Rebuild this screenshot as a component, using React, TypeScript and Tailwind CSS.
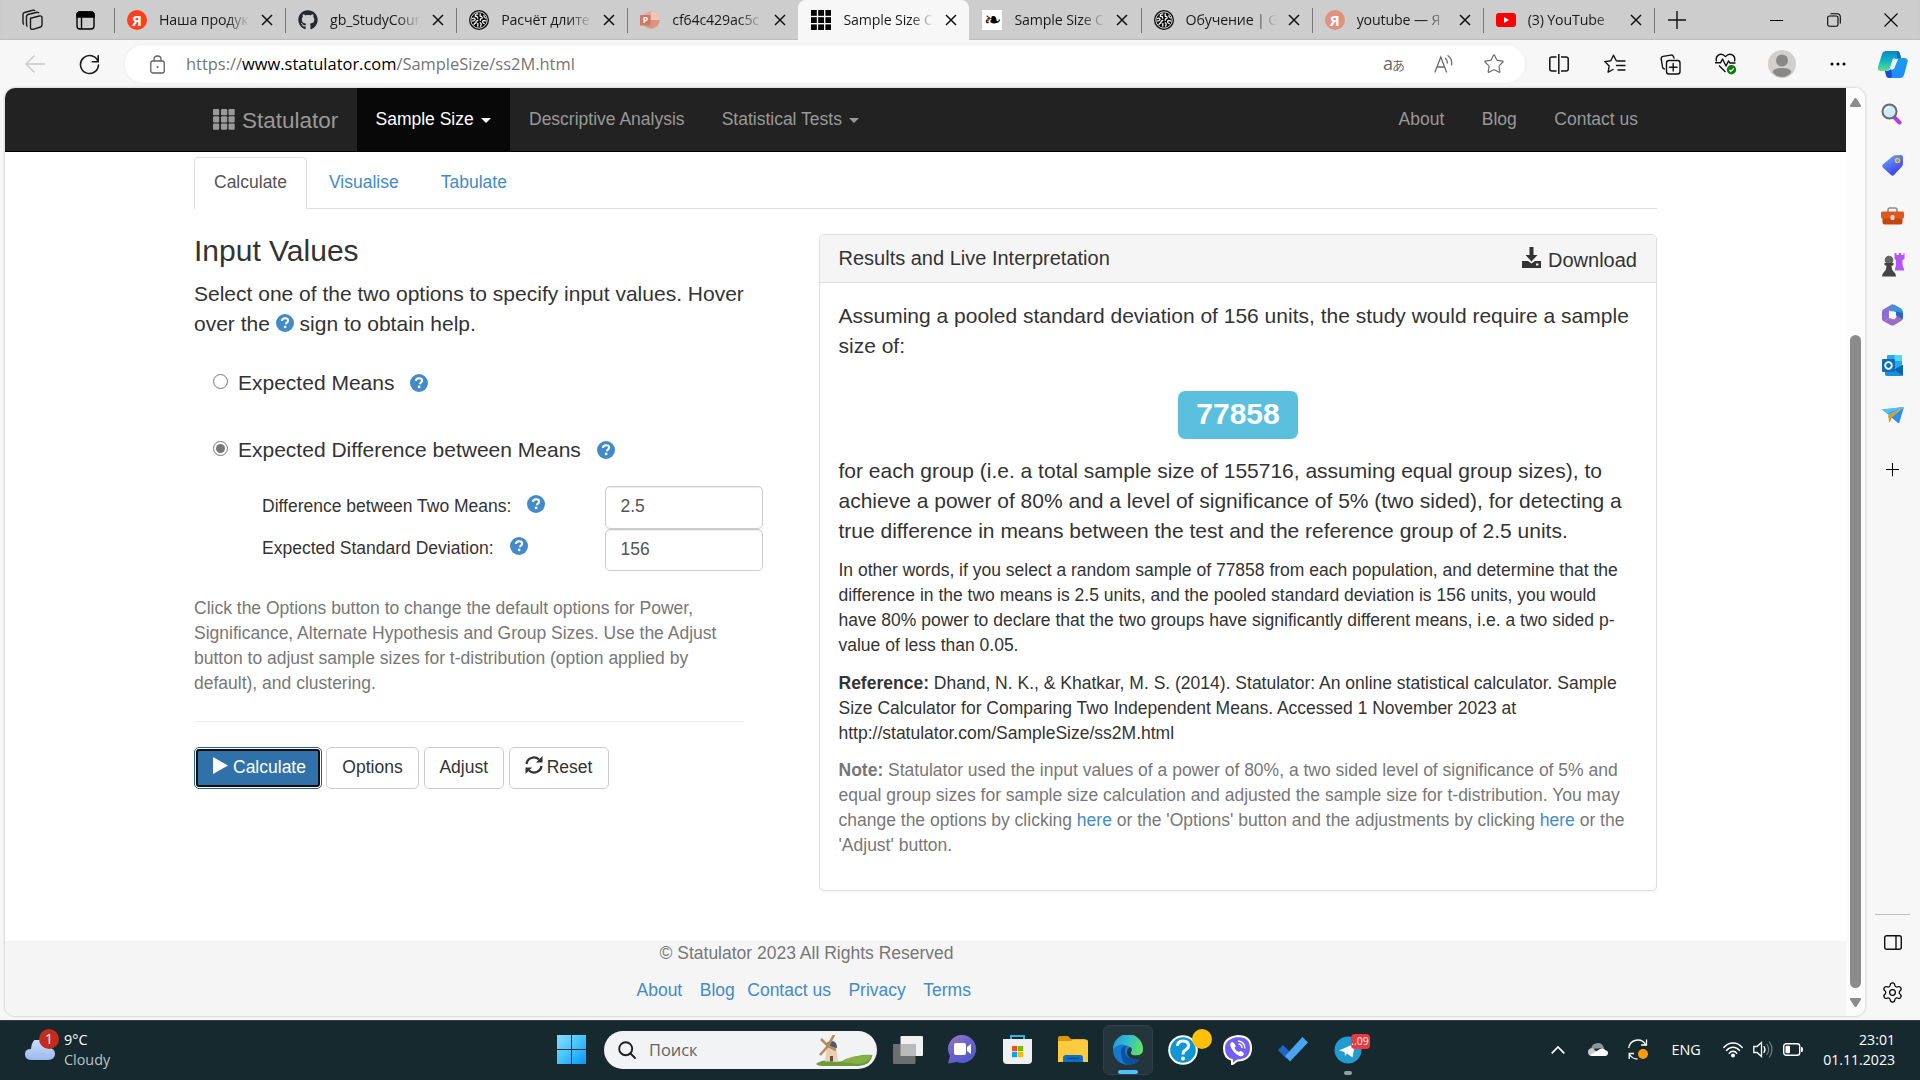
import React from 'react';
import { Star, Plus, Settings } from 'lucide-react';
import { FaGithub } from 'react-icons/fa';

const fade = '[mask-image:linear-gradient(to_right,black_74%,transparent_100%)]';

function Close() {
  return (
    <svg width="12" height="12" viewBox="0 0 12 12" stroke="#111" strokeWidth="1.5" fill="none">
      <path d="M1 1l10 10M11 1L1 11" />
    </svg>
  );
}

function Yandex({ dim }: { dim?: boolean }) {
  return (
    <span className={`flex h-5 w-5 items-center justify-center rounded-full text-[15px] leading-none font-bold text-white ${dim ? 'bg-[#e0917f]' : 'bg-[#fc3f1d]'}`}>
      Я
    </span>
  );
}

function Brain() {
  return (
    <svg width="20" height="20" viewBox="0 0 20 20" fill="none">
      <circle cx="10" cy="10" r="10" fill="#0a0a0a" />
      <circle cx="10" cy="10" r="8.200" stroke="#e6e6e6" strokeWidth="1" />
      <g stroke="#f2f2f2" strokeWidth="1.300" strokeLinecap="round" strokeLinejoin="round">
        <path d="M8.800 3.800Q6 4 6.300 6.300 8.500 6 8.700 8.200M3.500 8.500Q5 7.500 6.200 9.300 5 11.500 3.300 11M8.700 10.500Q6.500 11 7 13 5.500 13 5 14.500M8.800 13.500v2.700" />
        <path d="M11.200 3.800v2.500Q13.500 6 13 8.300 11 8.500 11.300 10.300M15 5.500Q14.500 7 16.500 8M16.700 11Q14.500 9.800 13.500 11.500 13.800 13.500 15.300 13.700M11.200 12.800Q13 14 11.500 16.200" />
      </g>
    </svg>
  );
}

function GridMark() {
  return (
    <svg width="20" height="20" viewBox="0 0 20 20">
      {[0, 7.2, 14.4].map((y) =>
        [0, 7.2, 14.4].map((x) => <rect key={`${x}-${y}`} x={x} y={y} width="5.800" height="5.800" fill="#000" />),
      )}
    </svg>
  );
}

function PowerPoint() {
  return (
    <svg width="20" height="20" viewBox="0 0 20 20">
      <circle cx="11" cy="10" r="8.800" fill="#e5a999" />
      <path d="M11 1.200a8.800 8.800 0 0 1 8.800 8.800H11z" fill="#f0c4b6" />
      <path d="M2.500 12a8.800 8.800 0 0 0 17.200-2H11z" fill="#db9482" />
      <rect x="0" y="5" width="10.500" height="10.500" rx="1" fill="#cf7765" />
      <text x="2.800" y="13.300" fontSize="8.500" fontWeight="700" fill="#fff" fontFamily="Open Sans, sans-serif">P</text>
    </svg>
  );
}

function Leaf() {
  return (
    <span className="flex h-5 w-5 items-center justify-center bg-white font-['DejaVu_Sans',sans-serif] text-[21px] leading-5 text-black">❧</span>
  );
}

function YouTube() {
  return (
    <svg width="20" height="20" viewBox="0 0 20 20">
      <rect x="0" y="3" width="20" height="14" rx="3" fill="#f00" />
      <path d="M8 7v6l5-3z" fill="#fff" />
    </svg>
  );
}

type TabProps = { icon: React.ReactNode; title: string; active?: boolean; line?: boolean };

function Tab({ icon, title, active, line }: TabProps) {
  return (
    <div className={`relative flex h-10 w-[171.100px] shrink-0 items-center pl-[13px] ${active ? 'rounded-t-lg bg-[#f7f7f7]' : ''}`}>
      {line && <span className="absolute top-2 left-0 h-[25px] w-px bg-[#767676]" />}
      <span className="flex h-5 w-5 shrink-0">{icon}</span>
      <span className={`ml-3 w-[91px] text-[14.200px] leading-5 tracking-[-0.15px] whitespace-nowrap text-[#1b1b1b] ${fade}`}>{title}</span>
      <span className="ml-[11px]">
        <Close />
      </span>
    </div>
  );
}

function TabStrip() {
  return (
    <div className="flex h-10 shrink-0 bg-[#cdcdcd] shadow-[inset_0_-1px_1px_#bdbdbd]">
      <div className="flex w-[114px] items-center gap-[32px] pl-[22px]">
        <svg width="22" height="22" viewBox="0 0 22 22" fill="none" stroke="#1b1b1b" strokeWidth="1.400" strokeLinejoin="round">
          <path d="M8.500 9.300l9-2.300q2-.4 2.500 1v8q0 1.500-1.500 2l-7.500 2.300q-2.500.5-2.500-1.800z" />
          <path d="M5.500 17.500q-1-.5-1-2V7.500q0-1.500 1.500-2L15 3.300q1.500-.3 2 1" />
          <path d="M2 15.500q-1-.5-1-2V5.500q0-1.500 1.500-2L11 1.200q1.500-.3 2 .8" />
        </svg>
        <svg width="19" height="19" viewBox="0 0 19 19" fill="none" stroke="#000" strokeWidth="1.400">
          <rect x="1" y="1" width="17" height="17" rx="3" />
          <path d="M1 6V4q0-3 3-3h11q3 0 3 3v2z" fill="#000" />
          <path d="M5.500 6v12" />
        </svg>
      </div>
      <Tab line icon={<Yandex />} title="Наша продук" />
      <Tab line icon={<FaGithub size={20} color="#24292f" />} title="gb_StudyCour" />
      <Tab line icon={<Brain />} title="Расчёт длите." />
      <Tab line icon={<PowerPoint />} title="cf64c429ac5c" />
      <Tab active icon={<GridMark />} title="Sample Size C" />
      <Tab icon={<Leaf />} title="Sample Size C" />
      <Tab line icon={<Brain />} title="Обучение | G" />
      <Tab line icon={<Yandex dim />} title="youtube — Я" />
      <Tab line icon={<YouTube />} title="(3) YouTube" />
      <div className="relative flex w-[71px] items-center pl-[14px]">
        <span className="absolute top-2 left-0 h-[25px] w-px bg-[#767676]" />
        <svg width="18" height="18" viewBox="0 0 18 18" stroke="#111" strokeWidth="1.400">
          <path d="M9 0v18M0 9h18" />
        </svg>
      </div>
      <div className="ml-auto flex w-[172px]">
        <div className="flex w-[57px] items-center justify-center">
          <span className="h-px w-[13px] bg-black" />
        </div>
        <div className="flex w-[57px] items-center justify-center">
          <svg width="14" height="14" viewBox="0 0 14 14" fill="none" stroke="#000" strokeWidth="1.100">
            <rect x="0.700" y="3" width="10.300" height="10.300" rx="1.800" />
            <path d="M3.500.8h6.500q3.300 0 3.300 3.300v6.500" />
          </svg>
        </div>
        <div className="flex w-[57px] items-center justify-center">
          <svg width="14" height="14" viewBox="0 0 14 14" stroke="#000" strokeWidth="1.100">
            <path d="M.5.5l13 13M13.500.5l-13 13" />
          </svg>
        </div>
      </div>
    </div>
  );
}

function Cell({ children, w = 'w-[55.700px]' }: { children: React.ReactNode; w?: string }) {
  return <span className={`flex shrink-0 items-center justify-center ${w}`}>{children}</span>;
}

function Toolbar() {
  return (
    <div className="flex h-12 shrink-0 items-start bg-[#f7f7f7] pt-[5px]">
      <div className="flex h-[38px] w-[125px] items-center pl-[25px]">
        <svg width="20" height="18" viewBox="0 0 20 18" fill="none" stroke="#c9c9c9" strokeWidth="1.400" strokeLinecap="round">
          <path d="M19.500 9H1M9 1L1 9l8 8" />
        </svg>
        <svg className="ml-[34px]" width="21" height="21" viewBox="0 0 21 21" fill="none" stroke="#1b1b1b" strokeWidth="1.600" strokeLinecap="round">
          <path d="M19 7.500A9 9 0 1 0 19.500 11M19.200 1.800v6h-6" />
        </svg>
      </div>
      <div className="flex h-[38px] w-[1400px] items-center rounded-full bg-white shadow-[0_0_4px_#0000000f]">
        <svg className="ml-[25px]" width="15" height="19" viewBox="0 0 15 19" fill="none" stroke="#5f5f5f" strokeWidth="1.300">
          <rect x="0.800" y="6" width="13.400" height="12" rx="2" />
          <path d="M4 6V4q0-3 3.500-3T11 4v2" />
          <circle cx="7.500" cy="12" r="1" fill="#5f5f5f" stroke="none" />
        </svg>
        <span className="ml-[21px] text-[16.450px] leading-6 text-[#757575]">
          https://<span className="text-black">www.statulator.com</span>/SampleSize/ss2M.html
        </span>
        <div className="mr-1.5 ml-auto flex text-[#6b6b6b]">
          <Cell w="w-[50px]">
            <span className="flex items-baseline text-[18px] leading-5">
              a<span className="-ml-px font-['Noto_Sans_CJK_JP'] text-[13px]">あ</span>
            </span>
          </Cell>
          <Cell w="w-[50px]">
            <svg width="20" height="18" viewBox="0 0 20 18" fill="none" stroke="#6b6b6b" strokeWidth="1.300" strokeLinecap="round">
              <path d="M1 17L6.800 2l5.700 15M3 12h7.500M11.500 3.500q2 1.500 1.800 4.500M14 .8q4.500 3 3.500 9" />
            </svg>
          </Cell>
          <Cell w="w-[50px]">
            <Star size={22} strokeWidth={1.3} />
          </Cell>
        </div>
      </div>
      <div className="ml-1.5 flex h-[38px] items-center">
        <Cell>
          <svg width="20" height="20" viewBox="0 0 20 20" fill="none" stroke="#111" strokeWidth="1.500">
            <path d="M7.500 3H3Q.8 3 .8 5v10q0 2 2.200 2h4.500M12 3h5q2.200 0 2.200 2v10q0 2-2.200 2h-5M9.800 0v20" />
          </svg>
        </Cell>
        <Cell>
          <svg width="22" height="21" viewBox="0 0 22 21" fill="none" stroke="#111" strokeWidth="1.400" strokeLinecap="round" strokeLinejoin="round">
            <path d="M14 7L12.300 6.700 9.500 1.200 6.800 6.700l-6 .9L5.200 12l-1.100 6.200 5-2.700M14.500 7H21M12.500 11.500H21M14 16h7" />
          </svg>
        </Cell>
        <Cell>
          <svg width="21" height="21" viewBox="0 0 21 21" fill="none" stroke="#111" strokeWidth="1.400" strokeLinecap="round">
            <rect x="6.500" y="6.500" width="13.500" height="13.500" rx="2.500" />
            <path d="M13.200 9.500v7.500M9.500 13.200H17M14 4l-.5-1.300Q12.800.8 11 1.100L3 2.400Q1 2.800 1.200 4.800L2.500 13q.3 1.500 1.800 2" />
          </svg>
        </Cell>
        <Cell>
          <svg width="22" height="22" viewBox="0 0 22 22" fill="none">
            <g stroke="#111" strokeWidth="1.400" strokeLinejoin="round">
              <path d="M1.600 8.500Q.3 4.500 3 2.400q4-2.600 7.500 1.200Q14-.2 18 2.400q2.700 2.100 1.400 6.100" />
              <path d="M0 9.800h5.500l2-3.800 3.500 7 2.500-5 1.500 2h5.500M4 12.500l6.500 6.500" />
            </g>
            <circle cx="16.500" cy="16.800" r="4.700" fill="#107c10" />
            <path d="M14.300 16.900l1.600 1.600 2.800-3" stroke="#fff" strokeWidth="1.200" />
          </svg>
        </Cell>
        <Cell>
          <svg width="28" height="28" viewBox="0 0 28 28">
            <circle cx="14" cy="14" r="14" fill="#d2d0ce" />
            <circle cx="14" cy="10.500" r="6" fill="#8a8886" />
            <path d="M4.500 22q1-4 9.500-4t9.500 4q-3.500 5-9.500 5t-9.500-5z" fill="#8a8886" />
          </svg>
        </Cell>
        <Cell>
          <svg className="ml-0.5" width="16" height="4" viewBox="0 0 16 4">
            <circle cx="2" cy="2" r="1.500" />
            <circle cx="8" cy="2" r="1.500" />
            <circle cx="14" cy="2" r="1.500" />
          </svg>
        </Cell>
        <span className="ml-[13px]">
          <svg width="30" height="27" viewBox="0 0 30 27">
            <defs>
              <linearGradient id="cpA" x1="0" y1="0" x2="0" y2="1">
                <stop offset="0" stopColor="#0a86c9" />
                <stop offset="0.500" stopColor="#12b5c0" />
                <stop offset="1" stopColor="#5fe08a" />
              </linearGradient>
              <linearGradient id="cpB" x1="0" y1="0" x2="0" y2="1">
                <stop offset="0" stopColor="#1a9be6" />
                <stop offset="1" stopColor="#1f8cff" />
              </linearGradient>
            </defs>
            <path d="M8 0h11q2 0 2.700 2l1.300 5h-6q-2 0-2.600 2l-2.600 8.500Q11 20 8 20H3q-4 0-3-4L4 3q1-3 4-3z" fill="url(#cpA)" />
            <path d="M22 27H11q-2 0-2.700-2L7 20h3q2 0 3-3l3-8.500Q17 6 20 7h6q4.500 0 3.500 4L26 24q-1 3-4 3z" fill="url(#cpB)" />
            <path d="M7 20h3q2 0 3-3l1 8q-.5 2-2 2-3 0-3.700-2z" fill="#1b4ad6" />
            <path d="M19 0q2 0 2.700 2L23 7h-4z" fill="#1567c8" />
            <path d="M15.500 9.500q.6-1.500 2-1.500h2.500L16.500 17q-.6 1.500-2 1.500H12z" fill="#f7f7f7" />
          </svg>
        </span>
      </div>
    </div>
  );
}

function Caret() {
  return <span className="ml-[7px] inline-block border-x-5 border-t-5 border-x-transparent border-t-current align-middle" />;
}

function Navbar() {
  return (
    <nav className="flex h-16 shrink-0 border-b border-black bg-[#222] pl-[208px] text-[#999]">
      <div className="flex w-[144px] items-start pt-[20px]">
        <svg className="mt-px" width="22" height="21" viewBox="0 0 22 21" fill="#999">
          {[0, 7.3, 14.6].map((y) =>
            [0, 8, 15.5].map((x) => <rect key={`${x}-${y}`} x={x} y={y} width="6.200" height="6.200" rx="1" />),
          )}
        </svg>
        <span className="ml-[7px] text-[22.500px] leading-[25px]">Statulator</span>
      </div>
      <div className="h-[63px] w-[153px] bg-[#080808] pt-[19px] pl-[18.500px] whitespace-nowrap text-white">
        Sample Size
        <Caret />
      </div>
      <div className="ml-[19px] pt-[19px]">Descriptive Analysis</div>
      <div className="ml-[37px] pt-[19px] whitespace-nowrap">
        Statistical Tests
        <Caret />
      </div>
      <div className="mr-[208px] ml-auto flex gap-[37.500px] pt-[19px]">
        <span>About</span>
        <span>Blog</span>
        <span>Contact us</span>
      </div>
    </nav>
  );
}

function Help({ className = '' }: { className?: string }) {
  return (
    <svg className={`inline-block shrink-0 ${className}`} width="18" height="18" viewBox="0 0 18 18">
      <circle cx="9" cy="9" r="9" fill="#428bca" />
      <path d="M5.900 6.900q.2-2.700 3.200-2.700 3 0 3 2.400 0 1.300-1.300 2.100-.7.500-.7 1.600" fill="none" stroke="#fff" strokeWidth="2.100" />
      <rect x="7.900" y="11.700" width="2.400" height="2.400" fill="#fff" />
    </svg>
  );
}

function Radio({ on }: { on?: boolean }) {
  return (
    <span className="mt-[5.500px] flex h-[15px] w-[15px] items-center justify-center self-start rounded-full border border-[#767676] bg-white">
      {on && <span className="h-[9px] w-[9px] rounded-full bg-[#767676]" />}
    </span>
  );
}

function FieldRow({ label, value }: { label: string; value: string }) {
  return (
    <div className="flex h-[42.500px] items-start pl-[68px]">
      <span className="flex w-[342.500px] pt-[7.500px]">
        {label}
        <Help className="mt-[1px] ml-[16px]" />
      </span>
      <div className="h-[42.500px] w-[158.500px] rounded-[5px] border border-[#ccc] bg-white pt-[7px] pl-[15px] text-[#555] shadow-[inset_0_1px_1px_#00000013]">
        {value}
      </div>
    </div>
  );
}

function Button({ children, className = '' }: { children: React.ReactNode; className?: string }) {
  return (
    <button className={`flex h-[42.500px] items-start justify-center rounded-[5px] border border-[#ccc] bg-white pt-[7px] text-[#333] ${className}`}>
      {children}
    </button>
  );
}

function InputColumn() {
  return (
    <section className="w-[625px] pt-[25px] whitespace-nowrap">
      <h3 className="text-[30px] leading-[33px]">Input Values</h3>
      <p className="mt-3 text-[21px] leading-[30px]">
        Select one of the two options to specify input values. Hover
        <br />
        over the <Help className="-mt-[5px]" /> sign to obtain help.
      </p>
      <div className="mt-[29px] flex h-[30px] items-center pl-[19px] text-[21px] leading-[30px]">
        <Radio />
        <span className="ml-[10px]">Expected Means</span>
        <Help className="ml-[16px]" />
      </div>
      <div className="mt-[37px] flex h-[30px] items-center pl-[19px] text-[21px] leading-[30px]">
        <Radio on />
        <span className="ml-[10px]">Expected Difference between Means</span>
        <Help className="ml-[16px]" />
      </div>
      <div className="mt-[21px]">
        <FieldRow label="Difference between Two Means:" value="2.5" />
        <FieldRow label="Expected Standard Deviation:" value="156" />
      </div>
      <p className="mt-[24.500px] text-[#777]">
        Click the Options button to change the default options for Power,
        <br />
        Significance, Alternate Hypothesis and Group Sizes. Use the Adjust
        <br />
        button to adjust sample sizes for t-distribution (option applied by
        <br />
        default), and clustering.
      </p>
      <hr className="mt-[25px] w-[550px] border-[#eee]" />
      <div className="mt-[25px] flex">
        <div className="rounded-[5px] border border-[#285e8e] bg-white p-px">
          <button className="flex h-[38.500px] w-[124px] items-start rounded-[3px] border-2 border-[#101010] bg-[#3071a9] pt-[4px] pl-[15px] text-white">
            <svg className="mt-[2px] mr-[5px]" width="15" height="17" viewBox="0 0 15 17" fill="#fff">
              <path d="M0 0l15 8.500L0 17z" />
            </svg>
            Calculate
          </button>
        </div>
        <Button className="ml-1 w-[93px]">Options</Button>
        <Button className="ml-[4.500px] w-[80.500px]">Adjust</Button>
        <Button className="ml-[4.500px] w-[100px]">
          <svg className="mt-[1.500px] mr-1" width="18" height="18" viewBox="0 0 18 18" fill="none" stroke="#333" strokeWidth="2.300">
            <path d="M1.500 8A7.500 7.500 0 0 1 14 3.500M16.500 10A7.500 7.500 0 0 1 4 14.500" />
            <path d="M17.500 0v6.500H11zM.5 18v-6.500H7z" fill="#333" stroke="none" />
          </svg>
          Reset
        </Button>
      </div>
    </section>
  );
}

function ResultsPanel() {
  return (
    <section className="mt-[25px] h-[657px] w-[838px] rounded-[5px] border border-[#ddd] bg-white whitespace-nowrap shadow-[0_1px_1px_#0000000d]">
      <header className="flex h-12 items-start rounded-t border-b border-[#ddd] bg-[#f5f5f5] pt-3 pr-[19px] pl-[18.500px] text-[20px] leading-[22px]">
        <span>Results and Live Interpretation</span>
        <svg className="ml-auto" width="19" height="21" viewBox="0 0 19 21" fill="#333">
          <path d="M7.500 0h4v8h4l-6 6.500L3.500 8h4z" />
          <path d="M0 14h6l3.500 2.500L13 14h6v7H0z" />
          <rect x="14" y="16.500" width="2.500" height="2" fill="#f5f5f5" />
        </svg>
        <span className="mt-[2px] ml-[7px]">Download</span>
      </header>
      <div className="pt-[18px] pl-[18.500px]">
        <p className="text-[21px] leading-[30px]">
          Assuming a pooled standard deviation of 156 units, the study would require a sample
          <br />
          size of:
        </p>
        <div className="mt-[30px] flex justify-center pr-[18.500px]">
          <span className="h-12 w-[120px] rounded-[7px] bg-[#5bc0de] text-center text-[30px] leading-[45px] font-bold text-white">77858</span>
        </div>
        <p className="mt-[17px] text-[21px] leading-[30px]">
          for each group (i.e. a total sample size of 155716, assuming equal group sizes), to
          <br />
          achieve a power of 80% and a level of significance of 5% (two sided), for detecting a
          <br />
          true difference in means between the test and the reference group of 2.5 units.
        </p>
        <p className="mt-3">
          In other words, if you select a random sample of 77858 from each population, and determine that the
          <br />
          difference in the two means is 2.5 units, and the pooled standard deviation is 156 units, you would
          <br />
          have 80% power to declare that the two groups have significantly different means, i.e. a two sided p-
          <br />
          value of less than 0.05.
        </p>
        <p className="mt-[13px]">
          <b>Reference:</b> Dhand, N. K., &amp; Khatkar, M. S. (2014). Statulator: An online statistical calculator. Sample
          <br />
          Size Calculator for Comparing Two Independent Means. Accessed 1 November 2023 at
          <br />
          http://statulator.com/SampleSize/ss2M.html
        </p>
        <p className="mt-3 text-[#777]">
          <b>Note:</b> Statulator used the input values of a power of 80%, a two sided level of significance of 5% and
          <br />
          equal group sizes for sample size calculation and adjusted the sample size for t-distribution. You may
          <br />
          change the options by clicking <a className="text-[#428bca]">here</a> or the 'Options' button and the adjustments by clicking{' '}
          <a className="text-[#428bca]">here</a> or the
          <br />
          'Adjust' button.
        </p>
      </div>
    </section>
  );
}

function WebPage() {
  return (
    <div className="flex h-[928px] w-[1860px] shrink-0 overflow-hidden rounded-[10px] bg-white shadow-[0_0_3px_#00000040]">
      <div className="flex w-[1841px] flex-col font-['Liberation_Sans',Arial,sans-serif] text-[17.500px] leading-[25px] text-[#333]">
        <Navbar />
        <div className="ml-[189px] w-[1463px]">
          <div className="flex h-[57px] items-end border-b border-[#ddd] pt-[5px]">
            <span className="-mb-px h-[52px] w-[113px] rounded-t-[5px] border border-b-0 border-[#ddd] bg-white pt-[12px] pl-[19px] text-[#555]">Calculate</span>
            <span className="h-[51px] pt-[13px] pl-[22px] text-[#428bca]">Visualise</span>
            <span className="h-[51px] pt-[13px] pl-[42px] text-[#428bca]">Tabulate</span>
          </div>
          <div className="flex">
            <InputColumn />
            <ResultsPanel />
          </div>
        </div>
        <footer className="mt-auto h-[75px] bg-[#f5f5f5]">
          <p className="pl-[654.500px] text-[#777]">© Statulator 2023 All Rights Reserved</p>
          <div className="mt-3 flex pl-[631.500px] text-[#428bca]">
            <span>About</span>
            <span className="ml-[17.500px]">Blog</span>
            <span className="ml-[12.500px]">Contact us</span>
            <span className="ml-[17.500px]">Privacy</span>
            <span className="ml-[17.500px]">Terms</span>
          </div>
        </footer>
      </div>
      <div className="flex w-[19px] flex-col items-center bg-[#fcfcfc] pt-[10px] pb-[9px]">
        <svg width="11" height="9" viewBox="0 0 11 9" fill="#8b8b8b">
          <path d="M5.500 0q.7 0 1.200.8L11 7.500q.2 1.500-1 1.500H1Q-.2 9 0 7.500L4.300.8Q4.800 0 5.500 0z" />
        </svg>
        <div className="mt-auto mb-[10px] h-[653px] w-[11px] rounded-full bg-[#8b8b8b]" />
        <svg width="11" height="9" viewBox="0 0 11 9" fill="#8b8b8b">
          <path d="M5.500 9q.7 0 1.200-.8L11 1.500Q11.200 0 10 0H1Q-.2 0 0 1.500l4.300 6.700q.5.800 1.200.8z" />
        </svg>
      </div>
    </div>
  );
}

function Sidebar() {
  return (
    <aside className="flex w-[55px] flex-col items-center">
      <div className="flex h-[52px] items-center pr-0.5">
        <svg width="22" height="22" viewBox="0 0 22 22">
          <path d="M13.500 14.500l5 5" stroke="#b43cf0" strokeWidth="4" strokeLinecap="round" />
          <circle cx="8.500" cy="8.500" r="7" fill="#cfe8fa" stroke="#6b6b6b" strokeWidth="2" />
          <path d="M4.500 7q1-3 4-3" stroke="#fff" strokeWidth="1.500" fill="none" />
        </svg>
      </div>
      <div className="flex h-[50px] items-center">
        <svg width="21" height="21" viewBox="0 0 21 21">
          <defs>
            <linearGradient id="tagG" x1="0" y1="0" x2="0.600" y2="1">
              <stop offset="0" stopColor="#6cb2f8" />
              <stop offset="1" stopColor="#3d3cf0" />
            </linearGradient>
          </defs>
          <path d="M11 1q1-.8 2-.8l6-.2q2 0 2 2v7q0 1-.7 2L12 20q-1.500 1.500-3 0L.8 12.500q-1.300-1.500 0-3z" fill="url(#tagG)" />
          <circle cx="15.500" cy="5.500" r="2" fill="#5a8af5" stroke="#f5c518" strokeWidth="1.600" />
        </svg>
      </div>
      <div className="flex h-[51px] items-center">
        <svg width="23" height="18" viewBox="0 0 23 18">
          <path d="M7 5V3q0-2 2-2h5q2 0 2 2v2" stroke="#8c8c8c" strokeWidth="1.600" fill="none" />
          <rect x="1.500" y="8" width="20" height="9.500" rx="2" fill="#c9430f" />
          <rect x="0" y="4.500" width="23" height="7" rx="1.500" fill="#dd5a1c" />
          <rect x="9.500" y="8" width="4" height="5" rx="1.500" fill="#d9d9d9" />
        </svg>
      </div>
      <div className="flex h-[48px] items-center">
        <svg width="24" height="24" viewBox="0 0 24 24">
          <path d="M13.500 0h2v2h2.200V0h2.600v2h2.200V0h1v6l-2 1v5l1.500 4v1.500h-9V16l1-4V7l-1.500-1z" fill="#b455f5" />
          <circle cx="8" cy="7" r="4.300" fill="#666" />
          <path d="M3.500 10h9v2l-2 1q0 4 2.500 6 2 1.500 2 4.500H1q0-3 2-4.500 2.500-2 2.500-6l-2-1z" fill="#444" />
        </svg>
      </div>
      <div className="flex h-[51px] items-center">
        <svg width="21" height="22" viewBox="0 0 21 22">
          <path d="M10.500 0l-8.500 5Q0 6 0 8v7q0 1.500 2 2.500l5-3V8q0-2 2-3l3-2z" fill="#8a6fd0" />
          <path d="M9 1q1.500-1.200 4 0l6 3.500Q21 6 21 8v6l-7-3V8L7.500 7z" fill="#3f8fdc" />
          <path d="M21 10v4q0 2-2 3l-6.500 4q-2 1-4 0L2 17.500l5.500-3.500 5 1.500 3-4.500z" fill="#9a6cc4" />
          <path d="M14 7.500v4l7 3.500V9z" fill="#2a63c4" />
          <circle cx="10.500" cy="11" r="3.600" fill="#f7f7f7" />
        </svg>
      </div>
      <div className="flex h-[50px] items-center">
        <svg width="21" height="21" viewBox="0 0 21 21">
          <rect x="5" y="0" width="15" height="13" rx="1" fill="#28a8ea" />
          <rect x="12.500" y="0" width="7.500" height="6" fill="#50d9ff" />
          <path d="M3 10l9 4 9-4v9q0 2-2 2H5q-2 0-2-2z" fill="#1490df" />
          <path d="M21 10v11l-9-6.500z" fill="#0a64ad" />
          <rect x="0" y="4" width="13" height="13" rx="1" fill="#0f6cbd" />
          <circle cx="6.500" cy="10.500" r="3.300" stroke="#fff" strokeWidth="1.800" fill="none" />
        </svg>
      </div>
      <div className="flex h-[50px] items-center">
        <svg width="22" height="17" viewBox="0 0 22 17">
          <path d="M0 2.500L22 0 7 8z" fill="#35a3f5" />
          <path d="M22 0L6 8.500 7.500 16 10 10z" fill="#e09a10" />
          <path d="M22 0L9.500 10.500 16 16q.8.500 1.300-.5z" fill="#2c8cf0" />
          <path d="M0 2.500L22 0 5 6.500z" fill="#4fc0f8" />
        </svg>
      </div>
      <div className="flex h-[58px] items-center">
        <Plus size={21} strokeWidth={1.2} />
      </div>
      <div className="mt-auto h-px w-[35px] bg-[#bdbdbd]" />
      <div className="flex h-[55px] items-center">
        <svg width="18" height="15" viewBox="0 0 18 15" fill="none" stroke="#111" strokeWidth="1.400">
          <rect x="0.700" y="0.700" width="16.600" height="13.600" rx="2" />
          <path d="M12 .7v13.600" />
        </svg>
      </div>
      <div className="mb-[5px] flex h-[45px] items-center">
        <Settings size={23} strokeWidth={1.3} />
      </div>
    </aside>
  );
}

function AppIcon({ children, active, dot }: { children: React.ReactNode; active?: boolean; dot?: boolean }) {
  return (
    <div className="flex w-[55px] justify-center">
      <div className={`relative flex h-[50px] w-[50px] items-center justify-center rounded-md ${active ? 'border border-[#304147] bg-[#24363c]' : ''}`}>
        {children}
        {active && <span className="absolute bottom-0 h-1 w-5 rounded-full bg-[#4cc2ff]" />}
        {dot && <span className="absolute bottom-0 h-1 w-2 rounded-full bg-[#949ea1]" />}
      </div>
    </div>
  );
}

function TaskbarApps() {
  return (
    <div className="flex">
      <AppIcon>
        <svg width="30" height="28" viewBox="0 0 30 28">
          <rect x="7.500" y="0" width="22.500" height="20" rx="1" fill="#f0f0f0" />
          <rect x="0" y="8" width="22.500" height="20" rx="1" fill="#6c6f70" />
          <rect x="7.500" y="8" width="15" height="12" fill="#b9bbbb" />
        </svg>
      </AppIcon>
      <AppIcon>
        <svg width="29" height="29" viewBox="0 0 29 29">
          <defs>
            <linearGradient id="chatG" x1="0" y1="0" x2="0.700" y2="1">
              <stop offset="0" stopColor="#a078b8" />
              <stop offset="0.500" stopColor="#6a62cf" />
              <stop offset="1" stopColor="#5059c9" />
            </linearGradient>
          </defs>
          <path d="M15 0a14 14 0 1 1-6 27L0 28.500 2 21A14 14 0 0 1 15 0z" fill="url(#chatG)" />
          <rect x="6" y="8" width="12" height="12" rx="2" fill="#fff" />
          <path d="M19 12l4-3v10l-4-3z" fill="#fff" />
        </svg>
      </AppIcon>
      <AppIcon>
        <svg width="29" height="29" viewBox="0 0 29 29">
          <path d="M8 6V1h13v5" stroke="#27b5f0" strokeWidth="2" fill="none" />
          <path d="M0 4h29v21q0 4-4 4H4q-4 0-4-4z" fill="#f0f0f0" />
          <path d="M8 4V2M21 4V2" stroke="#27b5f0" strokeWidth="2" />
          <rect x="9" y="11" width="5.200" height="5.200" fill="#f25022" />
          <rect x="15" y="11" width="5.200" height="5.200" fill="#7fba00" />
          <rect x="9" y="17" width="5.200" height="5.200" fill="#00a4ef" />
          <rect x="15" y="17" width="5.200" height="5.200" fill="#ffb900" />
        </svg>
      </AppIcon>
      <AppIcon>
        <svg width="30" height="27" viewBox="0 0 30 27">
          <path d="M0 2q0-2 2-2h8l3 3h14v6H0z" fill="#d9970f" />
          <path d="M0 5h13l2-1.500h13q2 0 2 2V26H0z" fill="#fccb3f" />
          <path d="M5 26v-4q0-3 3-3h14q3 0 3 3v4z" fill="#0f6fc6" />
          <path d="M9 22.500h12" stroke="#0a4a8c" strokeWidth="1.300" />
        </svg>
      </AppIcon>
      <AppIcon active>
        <svg width="30" height="30" viewBox="0 0 30 30">
          <defs>
            <linearGradient id="edgeA" x1="0" y1="0.300" x2="1" y2="0.600">
              <stop offset="0" stopColor="#1f9de0" />
              <stop offset="0.500" stopColor="#35c1c8" />
              <stop offset="1" stopColor="#68e05a" />
            </linearGradient>
          </defs>
          <circle cx="15" cy="15" r="15" fill="#1479cf" />
          <path d="M0 14A15 15 0 0 1 30 14q0 6.500-7 6.500-6 0-5-3.500 1.500-3-1-5Q8 6 0 14z" fill="url(#edgeA)" />
          <path d="M8 16q0-5 6-5-4 4-1 9 4.500 6 14.500 3.500Q23 30 15 30 8 28 8 16z" fill="#0e4f9e" />
          <path d="M17 12q3 2 1 5-1 3.500 5 3.500 4.500 0 7-3v4.500l-2.500 2q-10 1.500-13-4-2-5 2.500-8z" fill="#24363c" />
        </svg>
      </AppIcon>
      <AppIcon>
        <svg width="30" height="30" viewBox="0 0 30 30">
          <circle cx="15" cy="15" r="13.800" fill="#0f96d3" stroke="#fff" strokeWidth="2" />
          <path d="M9.500 11q0-5 5.500-5t5.500 4.500q0 3-3 4.500-2.500 1.300-2.500 4.500" stroke="#fff" strokeWidth="3" fill="none" />
          <circle cx="15" cy="23.500" r="2" fill="#fff" />
        </svg>
        <span className="absolute top-1 right-[4px] h-5 w-5 translate-x-2 rounded-full bg-[#ffc10a]" />
      </AppIcon>
      <AppIcon>
        <svg width="29" height="30" viewBox="0 0 29 30">
          <path d="M14.500 1Q28 1 28 13t-13.500 12.500L9 29.500V25Q1 23 1 13T14.500 1z" fill="#7360f2" stroke="#fff" strokeWidth="2" />
          <path d="M9 7q-3 1-1 5.500 3 6 8.500 8.500 3.500 1 4.500-2 0-1.500-3-3-1.500 0-2 1-3.500-1-4.500-4.500 1.500-.5 1-2Q11 7 9 7z" fill="#fff" />
          <path d="M15 6q6.500.5 7 7.500M15.500 9q3.500.5 3.500 4" stroke="#fff" strokeWidth="1.300" fill="none" />
        </svg>
      </AppIcon>
      <AppIcon>
        <svg width="30" height="25" viewBox="0 0 30 25">
          <path d="M5 8l8 8-4.500 6L0 13z" fill="#2264c8" />
          <path d="M24.500 0L30 5.500 12 24.500 7 19z" fill="#4aa4f0" />
        </svg>
      </AppIcon>
      <AppIcon dot>
        <svg width="28" height="28" viewBox="0 0 28 28">
          <circle cx="14" cy="14" r="13.500" fill="#229bd3" />
          <path d="M5 14.500L21 7.500l-2.500 14-5.500-4-2 2.500-.5-4z" fill="#fff" />
        </svg>
        <span className="absolute top-[9px] right-[3px] flex h-[15px] w-[19px] items-center justify-center rounded bg-[#f0383b] text-[10.500px] leading-[14px] text-white">..09</span>
      </AppIcon>
    </div>
  );
}

function Windmill() {
  return (
    <svg width="57" height="32" viewBox="0 0 57 32">
      <path d="M0 29q6-5 14-3 12 2 20-2.500 10-4.500 22.500-3.500Q55 30 43 31H6q-4 0-6-2z" fill="#6c9a3a" />
      <path d="M24 27q10-7 32-7-3 8-14 9z" fill="#86b045" />
      <path d="M11 11h9l2 15.500H9z" fill="#e3d3b4" />
      <path d="M10 12q0-6 5.500-6t5.500 7z" fill="#4a5a66" />
      <path d="M18 0L12 11 4 20M5 4l7 7 8 4" stroke="#b98a5c" strokeWidth="2.600" fill="none" />
      <rect x="14" y="21" width="3" height="5.500" fill="#6a4b36" />
    </svg>
  );
}

function Taskbar() {
  return (
    <div className="flex h-[60px] shrink-0 items-center border-t border-[#2f4146] bg-[#15292f] pb-[2px] text-[14.400px] leading-5 text-white">
      <div className="flex w-[557px] items-center pl-[25px]">
        <div className="relative h-5 w-[30px]">
          <svg width="30" height="24" viewBox="0 0 30 24">
            <defs>
              <linearGradient id="cloudG" x1="0" y1="0" x2="0" y2="1">
                <stop offset="0" stopColor="#cfe0fb" />
                <stop offset="1" stopColor="#9db9ee" />
              </linearGradient>
            </defs>
            <path d="M7 20q-7 0-7-6 0-5 6-5Q7-2 15-2t9 10q6 .5 6 6T23 20z" fill="url(#cloudG)" />
          </svg>
          <span className="absolute -top-[11px] left-[14px] h-5 w-5 rounded-full bg-[#c42b1c] text-center text-[14px] leading-5">1</span>
        </div>
        <div className="ml-[9px]">
          <p>9°C</p>
          <p className="text-[#bcc4c6]">Cloudy</p>
        </div>
      </div>
      <svg width="29" height="29" viewBox="0 0 29 29">
        <defs>
          <linearGradient id="winG" x1="0" y1="0" x2="1" y2="1">
            <stop offset="0" stopColor="#8adcff" />
            <stop offset="0.500" stopColor="#42c4fb" />
            <stop offset="1" stopColor="#0a94ff" />
          </linearGradient>
        </defs>
        <path d="M0 0h14v14H0zM15 0h14v14H15zM0 15h14v14H0zM15 15h14v14H15z" fill="url(#winG)" />
      </svg>
      <div className="ml-[18px] flex h-[38px] w-[273px] items-center rounded-full bg-[#f1f3f5] pl-[14px] text-[16.400px] text-[#5f6466]">
        <svg width="18" height="18" viewBox="0 0 18 18" fill="none" stroke="#222" strokeWidth="1.900" strokeLinecap="round">
          <circle cx="7.700" cy="7.700" r="6.500" />
          <path d="M12.500 12.500l4.500 4.500" />
        </svg>
        <span className="ml-[13px]">Поиск</span>
        <span className="mr-1 ml-auto pt-[2px]">
          <Windmill />
        </span>
      </div>
      <span className="w-[3px]" />
      <TaskbarApps />
      <div className="mr-[25px] ml-auto flex items-center">
        <svg width="14" height="8" viewBox="0 0 14 8" fill="none" stroke="#fff" strokeWidth="1.700">
          <path d="M.7 7.300L7 1l6.300 6.300" />
        </svg>
        <svg className="ml-[23px]" width="20" height="13" viewBox="0 0 20 13">
          <path d="M3 6Q4 0 10 0q4.500 0 6 5z" fill="#8d9698" />
          <path d="M4 13q-4 0-4-4 0-4 5-4l7 8z" fill="#c5cacb" />
          <path d="M4 13l-2-1 10-6q4-2 5 1 3 .5 3 3t-3 3z" fill="#fff" />
        </svg>
        <div className="relative ml-[20px] h-[21px] w-5">
          <svg width="20" height="21" viewBox="0 0 20 21" fill="none" stroke="#fff" strokeWidth="1.300">
            <path d="M.8 9A9 9 0 0 1 17.500 5.500M18.500.5V6H13M1.200 20v-5.500H6M1.500 15.500Q4.500 20 9.500 20" />
          </svg>
          <span className="absolute top-[10px] left-[10px] h-[10px] w-[10px] rounded-full bg-[#ff9a0a]" />
        </div>
        <span className="ml-[23.500px] w-[51.500px] text-[14.400px]">ENG</span>
        <svg width="20" height="16" viewBox="0 0 20 16" fill="none" stroke="#fff" strokeWidth="1.400" strokeLinecap="round">
          <path d="M.8 5.500Q4.500 1 10 1t9.200 4.500M3.500 8.500Q6 5.200 10 5.200t6.500 3.300M6.200 11.300Q7.500 9.300 10 9.300t3.800 2" />
          <circle cx="10" cy="13.500" r="1.300" fill="#fff" />
        </svg>
        <svg className="ml-[10px]" width="20" height="17" viewBox="0 0 20 17" fill="none" stroke="#fff" strokeWidth="1.300" strokeLinecap="round">
          <path d="M.8 5.500H4L8.500 1.500v14L4 11.500H.8zM11 5.500q2 3 0 6" />
          <path d="M14 3.500q3.500 5 0 10M16.500 1q5 7.500 0 15" stroke="#6d7b7f" />
        </svg>
        <svg className="ml-[10px]" width="20" height="13" viewBox="0 0 20 13" fill="none" stroke="#fff" strokeWidth="1.400">
          <rect x="0.700" y="0.700" width="16" height="11.600" rx="2.500" />
          <rect x="2.500" y="2.700" width="4.500" height="7.600" rx="1" fill="#fff" stroke="none" />
          <path d="M18 4h1q1 0 1 2.500T19 9h-1z" fill="#fff" stroke="none" />
        </svg>
        <div className="w-[92px] text-right text-[14.100px]">
          <p>23:01</p>
          <p>01.11.2023</p>
        </div>
      </div>
    </div>
  );
}

export default function App() {
  return (
    <div className="flex h-[1080px] w-[1920px] flex-col overflow-hidden bg-[#f7f7f7] font-['Open_Sans','Noto_Sans_CJK_JP',sans-serif]">
      <TabStrip />
      <Toolbar />
      <div className="flex h-[932px] shrink-0 pl-[5px]">
        <WebPage />
        <Sidebar />
      </div>
      <Taskbar />
    </div>
  );
}
